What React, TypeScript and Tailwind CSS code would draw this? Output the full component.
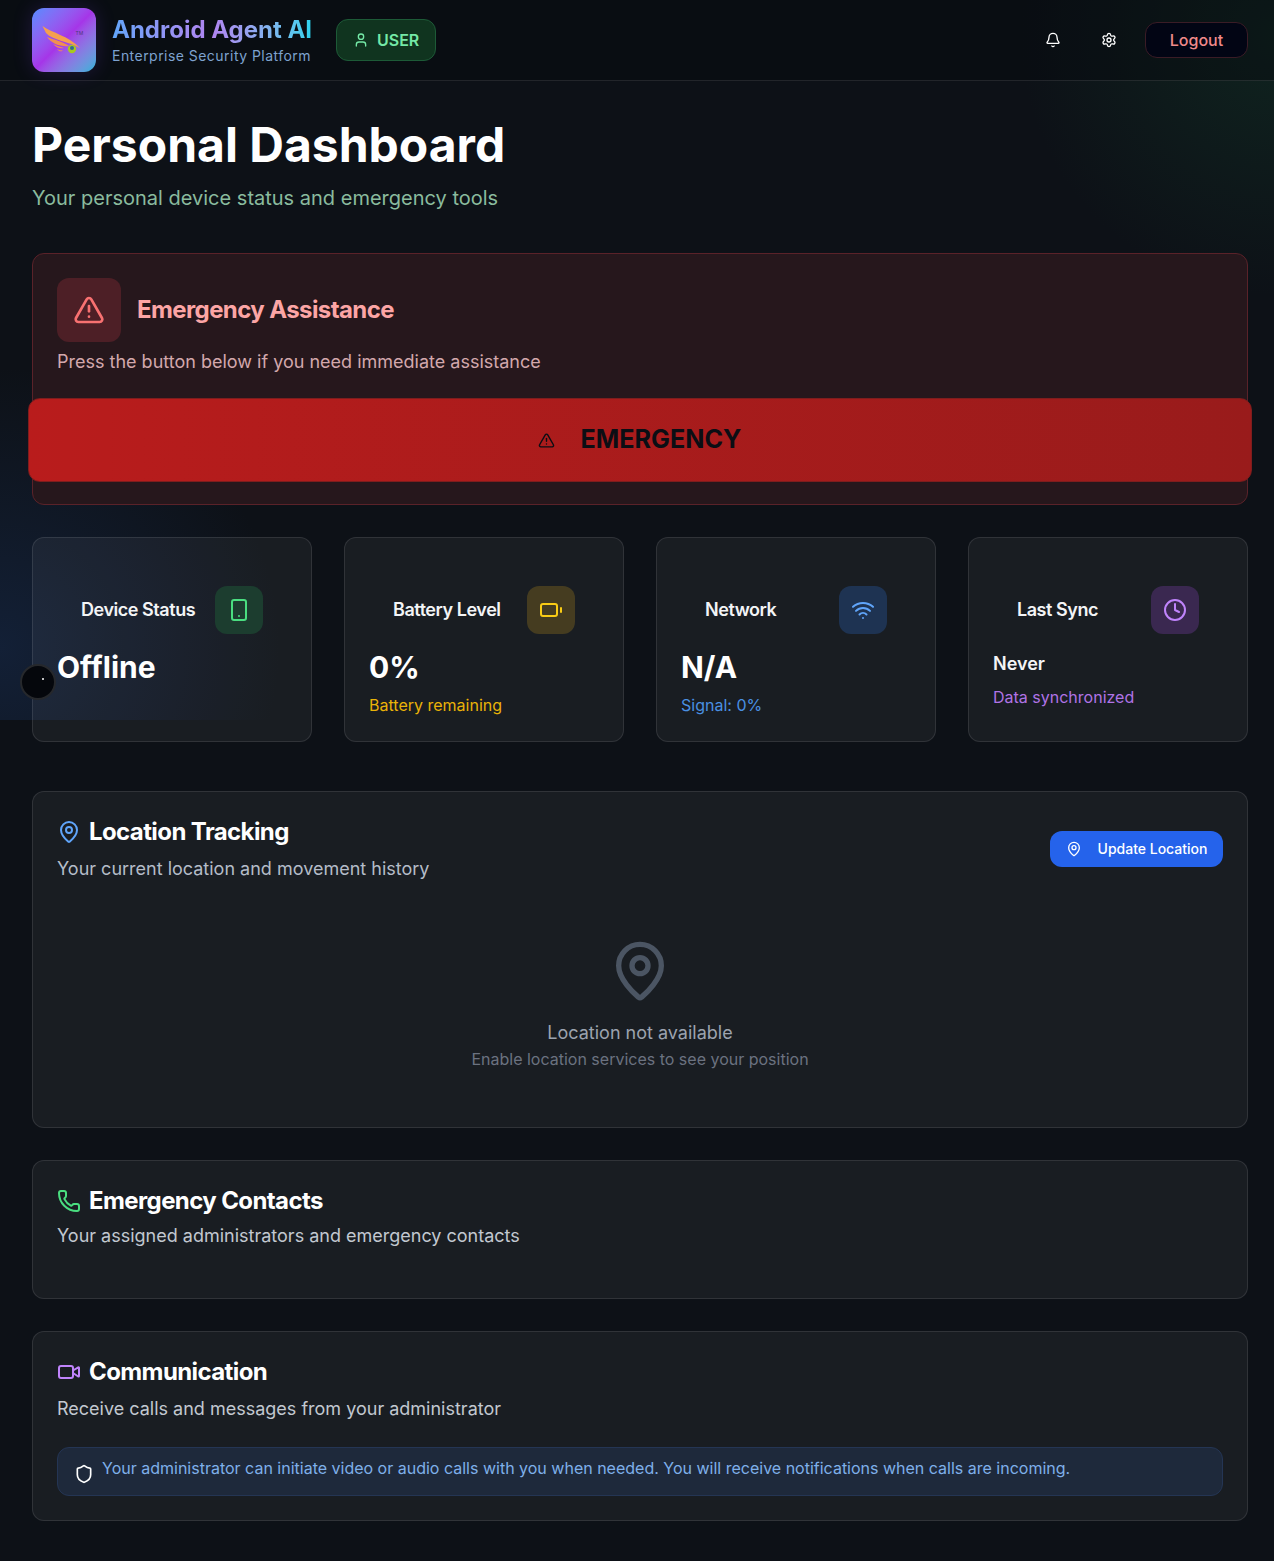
import { AlertTriangle, Bell, Clock, MapPin, Phone, Settings, Shield, Smartphone, User, Video, Wifi, Battery } from 'lucide-react';

const stats = [
  { label: 'Device Status', value: 'Offline', sub: '', Icon: Smartphone, iconBox: 'bg-[#1c3d2f]', iconColor: 'text-[#4ade80]', subColor: '' },
  { label: 'Battery Level', value: '0%', sub: 'Battery remaining', Icon: Battery, iconBox: 'bg-[#453c20]', iconColor: 'text-[#facc15]', subColor: 'text-[#eab308]' },
  { label: 'Network', value: 'N/A', sub: 'Signal: 0%', Icon: Wifi, iconBox: 'bg-[#1e3352]', iconColor: 'text-[#60a5fa]', subColor: 'text-[#4a90e2]' },
];

function Logo() {
  return (
    <div className="flex h-16 w-16 shrink-0 items-center justify-center rounded-xl bg-gradient-to-br from-[#4f8cff] via-[#a535e8] to-[#0fb4d8] shadow-[0_0_20px_rgba(124,58,237,0.2)]">
      <svg width="64" height="64" viewBox="0 0 64 64" fill="none">
        <path d="M10.5 18 C20 25 37 28 48 40 C38 34 20 32 14 25 Z" fill="#f5a04f" />
        <path d="M15 29 C22 32 30 33 37 38 C29 39 20 36 15 29 Z" fill="#f09050" />
        <path d="M21 36 C26 38.5 29 39 32 40 C28 41 24 39.5 21 36 Z" fill="#ee8a5c" />
        <path d="M25 41 C27 42 29 42.5 31 42.5 C29 44 27 43.5 25 41 Z" fill="#ee8a5c" />
        <circle cx="40" cy="41" r="4.2" fill="#a8c81e" />
        <circle cx="40" cy="40" r="2" fill="#2f6a94" />
        <text x="43.5" y="27" fontSize="5" fill="#4b3a7a" fontFamily="Inter, sans-serif">TM</text>
      </svg>
    </div>
  );
}

function StatCard({ label, value, sub, Icon, iconBox, iconColor, subColor }: (typeof stats)[number]) {
  return (
    <div className="h-[205px] rounded-xl border border-white/10 bg-white/5">
      <div className="flex items-center justify-between p-12 pb-0">
        <span className="text-lg font-semibold tracking-[-0.025em] text-[#f3f4f6]">{label}</span>
        <div className={`flex h-12 w-12 items-center justify-center rounded-xl ${iconBox}`}>
          <Icon className={`h-6 w-6 ${iconColor}`} />
        </div>
      </div>
      <div className="px-6 pt-[15px]">
        <div className="text-3xl leading-9 font-bold text-white">{value}</div>
        {sub && <div className={`mt-2 text-base ${subColor}`}>{sub}</div>}
      </div>
    </div>
  );
}

export default function App() {
  return (
    <div className="h-[1561px] w-full overflow-hidden">
      <div className="relative h-[1561px] w-[1280px] bg-[#0d1117] font-['Inter',sans-serif] text-white">
        <div className="pointer-events-none absolute inset-x-0 top-0 h-[720px] bg-[radial-gradient(circle_280px_at_0%_90%,rgba(26,50,92,0.45)_0%,rgba(26,50,92,0.22)_50%,transparent_100%),radial-gradient(circle_260px_at_100%_5%,rgba(20,74,48,0.32)_0%,transparent_100%)]" />

        <header className="relative flex h-[81px] items-center justify-between border-b border-white/10 bg-[#05070c]/40 px-8">
          <div className="flex items-center gap-4">
            <Logo />
            <div className="flex flex-col">
              <span className="bg-gradient-to-r from-[#60a5fa] via-[#b084f0] to-[#22d3ee] bg-clip-text text-2xl leading-8 font-bold text-transparent">Android Agent AI</span>
              <span className="text-sm leading-5 tracking-[0.033em] text-[#7ea2cf]">Enterprise Security Platform</span>
            </div>
            <div className="ml-2 flex h-[42px] w-[100px] items-center justify-center gap-2 rounded-xl border border-[#1d5a37] bg-[#10341f] text-base font-semibold text-[#74e8a6]">
              <User className="h-4 w-4" />
              USER
            </div>
          </div>
          <div className="flex items-center">
            <Bell className="h-4 w-4 text-white" />
            <Settings className="ml-10 h-4 w-4 text-white" />
            <button className="ml-7 h-9 w-[103px] rounded-xl border border-[#3a1c26] bg-[#020514] text-base font-medium text-[#f08a8a]">Logout</button>
          </div>
        </header>

        <main className="relative px-8 pt-8">
          <h1 className="text-5xl leading-[64px] font-bold text-white">Personal Dashboard</h1>
          <p className="mt-[7px] text-xl leading-7 text-[#8abb9e]">Your personal device status and emergency tools</p>

          <section className="mt-[41px] h-[252px] rounded-xl border border-[#5a2229] bg-[#26171c] p-6">
            <div className="flex items-center gap-4">
              <div className="flex h-16 w-16 items-center justify-center rounded-xl bg-[#4d1f26]">
                <AlertTriangle className="h-8 w-8 text-[#f87171]" />
              </div>
              <h2 className="text-2xl font-bold tracking-[-0.025em] text-[#fca5a5]">Emergency Assistance</h2>
            </div>
            <p className="mt-[6px] text-lg leading-7 text-[#d3a8ac]">Press the button below if you need immediate assistance</p>
            <button className="-mx-[29px] mt-[22px] flex h-[84px] w-[1224px] items-center justify-center gap-[25px] rounded-xl border border-[#7f1d1d] bg-gradient-to-r from-[#b91c1c] to-[#991b1b] text-[25.2px] font-bold text-[#0b0e14]">
              <AlertTriangle className="h-[17px] w-[17px]" />
              EMERGENCY
            </button>
          </section>

          <div className="mt-8 grid grid-cols-4 gap-8">
            {stats.map((s) => <StatCard key={s.label} {...s} />)}
            <div className="h-[205px] rounded-xl border border-white/10 bg-white/5">
              <div className="flex items-center justify-between p-12 pb-0">
                <span className="text-lg font-semibold tracking-[-0.025em] text-[#f3f4f6]">Last Sync</span>
                <div className="flex h-12 w-12 items-center justify-center rounded-xl bg-[#3a2850]">
                  <Clock className="h-6 w-6 text-[#c084fc]" />
                </div>
              </div>
              <div className="px-6 pt-4">
                <div className="text-lg leading-7 font-semibold text-[#f3f4f6]">Never</div>
                <div className="mt-[7px] text-base text-[#b073e6]">Data synchronized</div>
              </div>
            </div>
          </div>

          <section className="mt-[49px] h-[337px] rounded-xl border border-white/10 bg-white/5 p-6">
            <div className="flex items-start justify-between">
              <div>
                <h2 className="flex items-center gap-2 text-2xl leading-8 font-bold tracking-[-0.025em] text-white">
                  <MapPin className="h-6 w-6 text-[#60a5fa]" />
                  Location Tracking
                </h2>
                <p className="mt-[7px] text-lg leading-7 text-[#b4bcc8]">Your current location and movement history</p>
              </div>
              <button className="mt-[15px] flex h-9 w-[173px] items-center justify-center gap-4 rounded-xl bg-[#2563eb] text-sm font-medium text-white">
                <MapPin className="h-4 w-4" />
                Update Location
              </button>
            </div>
            <div className="mt-[56px] flex flex-col items-center">
              <MapPin className="h-16 w-16 text-[#4b5563]" />
              <p className="mt-4 text-lg leading-7 text-[#9ca3af]">Location not available</p>
              <p className="text-base text-[#6b7280]">Enable location services to see your position</p>
            </div>
          </section>

          <section className="mt-8 h-[139px] rounded-xl border border-white/10 bg-white/5 p-6">
            <h2 className="flex items-center gap-2 text-2xl leading-8 font-bold tracking-[-0.025em] text-white">
              <Phone className="h-6 w-6 text-[#4ade80]" />
              Emergency Contacts
            </h2>
            <p className="mt-[5px] text-lg leading-7 text-[#c2c8d0]">Your assigned administrators and emergency contacts</p>
          </section>

          <section className="mt-8 h-[190px] rounded-xl border border-white/10 bg-white/5 p-6">
            <h2 className="flex items-center gap-2 text-2xl leading-8 font-bold tracking-[-0.025em] text-white">
              <Video className="h-6 w-6 text-[#c084fc]" />
              Communication
            </h2>
            <p className="mt-[7px] text-lg leading-7 text-[#c2c8d0]">Receive calls and messages from your administrator</p>
            <div className="mt-6 flex h-[49px] items-start gap-2 rounded-xl border border-[#243554] bg-[#1e293b] px-4 pt-2">
              <Shield className="mt-2 h-5 w-5 shrink-0 text-white" />
              <span className="text-base leading-6 text-[#7fb0ea]">Your administrator can initiate video or audio calls with you when needed. You will receive notifications when calls are incoming.</span>
            </div>
          </section>
        </main>

        {/* floating dot over the first card */}
        <div className="absolute left-[20px] top-[664px] h-9 w-9 rounded-full border-2 border-[#26282c] bg-[#05070c]">
          <div className="absolute left-[20px] top-[12px] h-[2px] w-[2px] rounded-full bg-white" />
        </div>
      </div>
    </div>
  );
}
